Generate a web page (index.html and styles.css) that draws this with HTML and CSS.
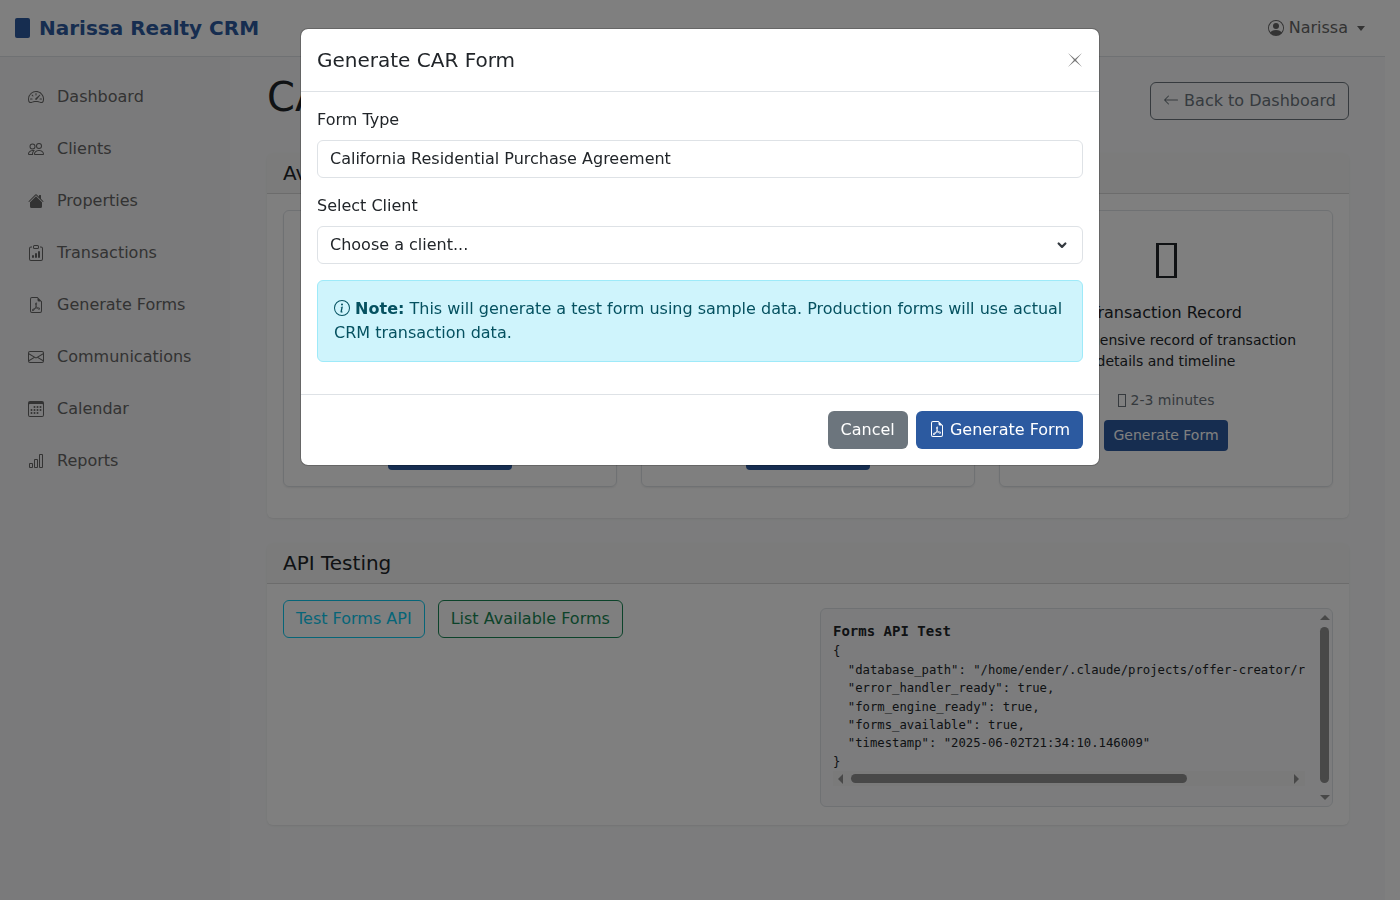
FILE: index.html
```html
<!doctype html>
<html>
  <head>
    <title>CAR Forms - Narissa Realty CRM</title>
    <meta name="viewport" content="width=device-width, initial-scale=1">
    <link rel="stylesheet" href="styles.css">
  </head>
  <body>
    <nav class="topbar">
      <a class="brand" href="#"><span class="brand-mark"></span>Narissa Realty CRM</a>
      <a class="user" href="#">
        <svg class="icon" viewBox="0 0 16 16"><path d="M11 6a3 3 0 1 1-6 0 3 3 0 0 1 6 0z"/><path fill-rule="evenodd" d="M0 8a8 8 0 1 1 16 0A8 8 0 0 1 0 8zm8-7a7 7 0 0 0-5.468 11.37C3.242 11.226 4.805 10 8 10s4.757 1.225 5.468 2.37A7 7 0 0 0 8 1z"/></svg>
        Narissa<span class="caret"></span>
      </a>
    </nav>

    <div class="layout">
      <aside class="sidebar">
        <a class="side-link" href="#">
          <svg class="icon" viewBox="0 0 16 16"><path d="M8 4a.5.5 0 0 1 .5.5V6a.5.5 0 0 1-1 0V4.5A.5.5 0 0 1 8 4zM3.732 5.732a.5.5 0 0 1 .707 0l.915.914a.5.5 0 1 1-.708.708l-.914-.915a.5.5 0 0 1 0-.707zM2 10a.5.5 0 0 1 .5-.5h1.586a.5.5 0 0 1 0 1H2.5A.5.5 0 0 1 2 10zm9.5 0a.5.5 0 0 1 .5-.5h1.5a.5.5 0 0 1 0 1H12a.5.5 0 0 1-.5-.5zm.754-4.246a.389.389 0 0 0-.527-.02L7.547 9.31a.91.91 0 1 0 1.302 1.258l3.434-4.297a.389.389 0 0 0-.029-.518z"/><path fill-rule="evenodd" d="M0 10a8 8 0 1 1 15.547 2.661c-.442 1.253-1.845 1.602-2.932 1.25C11.309 13.488 9.475 13 8 13c-1.474 0-3.31.488-4.615.911-1.087.352-2.49.003-2.932-1.25A7.988 7.988 0 0 1 0 10zm8-7a7 7 0 0 0-6.603 9.329c.203.575.923.876 1.68.63C4.397 12.533 6.358 12 8 12s3.604.532 4.923.96c.757.245 1.477-.056 1.68-.631A7 7 0 0 0 8 3z"/></svg>
          Dashboard
        </a>
        <a class="side-link" href="#">
          <svg class="icon" viewBox="0 0 16 16"><path d="M15 14s1 0 1-1-1-4-5-4-5 3-5 4 1 1 1 1h8Zm-7.978-1A.261.261 0 0 1 7 12.996c.001-.264.167-1.03.76-1.72C8.312 10.629 9.282 10 11 10c1.717 0 2.687.63 3.24 1.276.593.69.758 1.457.76 1.72l-.008.002a.274.274 0 0 1-.014.002H7.022ZM11 7a2 2 0 1 0 0-4 2 2 0 0 0 0 4Zm3-2a3 3 0 1 1-6 0 3 3 0 0 1 6 0ZM6.936 9.28a5.88 5.88 0 0 0-1.23-.247A7.35 7.35 0 0 0 5 9c-4 0-5 3-5 4 0 .667.333 1 1 1h4.216A2.238 2.238 0 0 1 5 13c0-1.01.377-2.042 1.09-2.904.243-.294.526-.569.846-.816ZM4.92 10A5.493 5.493 0 0 0 4 13H1c0-.26.164-1.03.76-1.724.545-.636 1.492-1.256 3.16-1.275ZM1.5 5.5a3 3 0 1 1 6 0 3 3 0 0 1-6 0Zm3-2a2 2 0 1 0 0 4 2 2 0 0 0 0-4Z"/></svg>
          Clients
        </a>
        <a class="side-link" href="#">
          <svg class="icon" viewBox="0 0 16 16"><path d="M8.707 1.5a1 1 0 0 0-1.414 0L.646 8.146a.5.5 0 0 0 .708.708L8 2.207l6.646 6.647a.5.5 0 0 0 .708-.708L13 5.793V2.5a.5.5 0 0 0-.5-.5h-1a.5.5 0 0 0-.5.5v1.293L8.707 1.5Z"/><path d="m8 3.293 6 6V13.5a1.5 1.5 0 0 1-1.5 1.5h-9A1.5 1.5 0 0 1 2 13.5V9.293l6-6Z"/></svg>
          Properties
        </a>
        <a class="side-link" href="#">
          <svg class="icon" viewBox="0 0 16 16"><path d="M4 11a1 1 0 1 1 2 0v1a1 1 0 1 1-2 0v-1zm6-4a1 1 0 1 1 2 0v5a1 1 0 1 1-2 0V7zM7 9a1 1 0 0 1 2 0v3a1 1 0 1 1-2 0V9z"/><path d="M4 1.5H3a2 2 0 0 0-2 2V14a2 2 0 0 0 2 2h10a2 2 0 0 0 2-2V3.5a2 2 0 0 0-2-2h-1v1h1a1 1 0 0 1 1 1V14a1 1 0 0 1-1 1H3a1 1 0 0 1-1-1V3.5a1 1 0 0 1 1-1h1v-1z"/><path d="M9.5 1a.5.5 0 0 1 .5.5v1a.5.5 0 0 1-.5.5h-3a.5.5 0 0 1-.5-.5v-1a.5.5 0 0 1 .5-.5h3zm-3-1A1.5 1.5 0 0 0 5 1.5v1A1.5 1.5 0 0 0 6.5 4h3A1.5 1.5 0 0 0 11 2.5v-1A1.5 1.5 0 0 0 9.5 0h-3z"/></svg>
          Transactions
        </a>
        <a class="side-link" href="#">
          <svg class="icon" viewBox="0 0 16 16"><path d="M14 14V4.5L9.5 0H4a2 2 0 0 0-2 2v12a2 2 0 0 0 2 2h8a2 2 0 0 0 2-2zM9.5 3A1.5 1.5 0 0 0 11 4.5h2V14a1 1 0 0 1-1 1H4a1 1 0 0 1-1-1V2a1 1 0 0 1 1-1h5.5v2z"/><path d="M4.603 14.087a.81.81 0 0 1-.438-.42c-.195-.388-.13-.776.08-1.102.198-.307.526-.568.897-.787a7.68 7.68 0 0 1 1.482-.645 19.697 19.697 0 0 0 1.062-2.227 7.269 7.269 0 0 1-.43-1.295c-.086-.4-.119-.796-.046-1.136.075-.354.274-.672.65-.823.192-.077.4-.12.602-.077a.7.7 0 0 1 .477.365c.088.164.12.356.127.538.007.188-.012.396-.047.614-.084.51-.27 1.134-.52 1.794a10.954 10.954 0 0 0 .98 1.686 5.753 5.753 0 0 1 1.334.05c.364.066.734.195.96.465.12.144.193.32.2.518.007.192-.047.382-.138.563a1.04 1.04 0 0 1-.354.416.856.856 0 0 1-.51.138c-.331-.014-.654-.196-.933-.417a5.712 5.712 0 0 1-.911-.95 11.651 11.651 0 0 0-1.997.406 11.307 11.307 0 0 1-1.02 1.51c-.292.35-.609.656-.927.787a.793.793 0 0 1-.58.029zm1.379-1.901c-.166.076-.32.156-.459.238-.328.194-.541.383-.647.547-.094.145-.096.25-.04.361.01.022.02.036.026.044a.266.266 0 0 0 .035-.012c.137-.056.355-.235.635-.572a8.18 8.18 0 0 0 .45-.606zm1.64-1.33a12.71 12.71 0 0 1 1.01-.193 11.744 11.744 0 0 1-.51-.858 20.801 20.801 0 0 1-.5 1.05zm2.446.45c.15.163.296.3.435.41.24.19.407.253.498.256a.107.107 0 0 0 .07-.015.307.307 0 0 0 .094-.125.436.436 0 0 0 .059-.2.095.095 0 0 0-.026-.063c-.052-.062-.2-.152-.518-.209a3.876 3.876 0 0 0-.612-.053zM8.078 7.8a6.7 6.7 0 0 0 .2-.828c.031-.188.043-.343.038-.465a.613.613 0 0 0-.032-.198.517.517 0 0 0-.145.04c-.087.035-.158.106-.196.283-.04.192-.03.469.046.822.024.111.054.227.09.346z"/></svg>
          Generate Forms
        </a>
        <a class="side-link" href="#">
          <svg class="icon" viewBox="0 0 16 16"><path d="M0 4a2 2 0 0 1 2-2h12a2 2 0 0 1 2 2v8a2 2 0 0 1-2 2H2a2 2 0 0 1-2-2V4Zm2-1a1 1 0 0 0-1 1v.217l7 4.2 7-4.2V4a1 1 0 0 0-1-1H2Zm13 2.383-4.708 2.825L15 11.105V5.383Zm-.034 6.876-5.64-3.471L8 9.583l-1.326-.795-5.64 3.47A1 1 0 0 0 2 13h12a1 1 0 0 0 .966-.741ZM1 11.105l4.708-2.897L1 5.383v5.722Z"/></svg>
          Communications
        </a>
        <a class="side-link" href="#">
          <svg class="icon" viewBox="0 0 16 16"><path d="M14 0H2a2 2 0 0 0-2 2v12a2 2 0 0 0 2 2h12a2 2 0 0 0 2-2V2a2 2 0 0 0-2-2zM1 3.857C1 3.384 1.448 3 2 3h12c.552 0 1 .384 1 .857v10.286c0 .473-.448.857-1 .857H2c-.552 0-1-.384-1-.857V3.857z"/><path d="M6.5 7a1 1 0 1 0 0-2 1 1 0 0 0 0 2zm3 0a1 1 0 1 0 0-2 1 1 0 0 0 0 2zm3 0a1 1 0 1 0 0-2 1 1 0 0 0 0 2zm-9 3a1 1 0 1 0 0-2 1 1 0 0 0 0 2zm3 0a1 1 0 1 0 0-2 1 1 0 0 0 0 2zm3 0a1 1 0 1 0 0-2 1 1 0 0 0 0 2zm3 0a1 1 0 1 0 0-2 1 1 0 0 0 0 2zm-9 3a1 1 0 1 0 0-2 1 1 0 0 0 0 2zm3 0a1 1 0 1 0 0-2 1 1 0 0 0 0 2zm3 0a1 1 0 1 0 0-2 1 1 0 0 0 0 2z"/></svg>
          Calendar
        </a>
        <a class="side-link" href="#">
          <svg class="icon" viewBox="0 0 16 16"><path d="M4 11H2v3h2v-3zm5-4H7v7h2V7zm5-5v12h-2V2h2zm-2-1a1 1 0 0 0-1 1v12a1 1 0 0 0 1 1h2a1 1 0 0 0 1-1V2a1 1 0 0 0-1-1h-2zM6 7a1 1 0 0 1 1-1h2a1 1 0 0 1 1 1v7a1 1 0 0 1-1 1H7a1 1 0 0 1-1-1V7zm-5 4a1 1 0 0 1 1-1h2a1 1 0 0 1 1 1v3a1 1 0 0 1-1 1H2a1 1 0 0 1-1-1v-3z"/></svg>
          Reports
        </a>
      </aside>

      <main class="content">
        <div class="page-head">
          <h1>CAR Forms</h1>
          <a class="btn btn-back" href="#">
            <svg class="icon" viewBox="0 0 16 16"><path fill-rule="evenodd" d="M15 8a.5.5 0 0 0-.5-.5H2.707l3.147-3.146a.5.5 0 1 0-.708-.708l-4 4a.5.5 0 0 0 0 .708l4 4a.5.5 0 0 0 .708-.708L2.707 8.5H14.5A.5.5 0 0 0 15 8z"/></svg>
            Back to Dashboard
          </a>
        </div>

        <section class="card card-forms">
          <h5 class="card-head">Available Forms</h5>
          <div class="form-grid">
            <div class="form-card">
              <div class="form-icon"><span class="tofu"></span></div>
              <h6>Purchase Agreement</h6>
              <p>California residential purchase agreement with all standard terms</p>
              <small><span class="tofu tofu-sm"></span>5-7 minutes</small>
              <a class="btn btn-sm" href="#">Generate Form</a>
            </div>
            <div class="form-card">
              <div class="form-icon"><span class="tofu"></span></div>
              <h6>Listing Agreement</h6>
              <p>Residential listing agreement for sellers and their agents</p>
              <small><span class="tofu tofu-sm"></span>4-5 minutes</small>
              <a class="btn btn-sm" href="#">Generate Form</a>
            </div>
            <div class="form-card">
              <div class="form-icon"><span class="tofu"></span></div>
              <h6>Transaction Record</h6>
              <p>Comprehensive record of transaction details and timeline</p>
              <small><span class="tofu tofu-sm"></span>2-3 minutes</small>
              <a class="btn btn-sm" href="#">Generate Form</a>
            </div>
          </div>
        </section>

        <section class="card card-api">
          <h5 class="card-head">API Testing</h5>
          <div class="api-grid">
            <div class="api-actions">
              <a class="btn btn-info" href="#">Test Forms API</a>
              <a class="btn btn-success" href="#">List Available Forms</a>
            </div>
            <div class="api-result">
              <div class="api-scroll">
                <strong>Forms API Test</strong>
<pre>{
  "database_path": "/home/ender/.claude/projects/offer-creator/real_estate_crm/crm.db",
  "error_handler_ready": true,
  "form_engine_ready": true,
  "forms_available": true,
  "timestamp": "2025-06-02T21:34:10.146009"
}</pre>
                <div class="hbar">
                  <span class="arrow arrow-left"></span>
                  <span class="hbar-thumb"></span>
                  <span class="arrow arrow-right"></span>
                </div>
              </div>
              <div class="vbar">
                <span class="arrow arrow-up"></span>
                <span class="vbar-thumb"></span>
                <span class="arrow arrow-down"></span>
              </div>
            </div>
          </div>
        </section>
      </main>
    </div>

    <div class="backdrop"></div>

    <div class="modal">
      <div class="modal-head">
        <h5>Generate CAR Form</h5>
        <button class="close" aria-label="Close">
          <svg viewBox="0 0 16 16"><path d="M1 1 8 7 15 1 9 8 15 15 8 9 1 15 7 8Z"/></svg>
        </button>
      </div>
      <div class="modal-body">
        <label class="field-label">Form Type</label>
        <input class="field field-text" type="text" value="California Residential Purchase Agreement" readonly>
        <label class="field-label">Select Client</label>
        <select class="field field-select">
          <option>Choose a client...</option>
        </select>
        <div class="alert">
          <svg class="icon" viewBox="0 0 16 16"><path d="M8 15A7 7 0 1 1 8 1a7 7 0 0 1 0 14zm0 1A8 8 0 1 0 8 0a8 8 0 0 0 0 16z"/><path d="m8.93 6.588-2.29.287-.082.38.45.083c.294.07.352.176.288.469l-.738 3.468c-.194.897.105 1.319.808 1.319.545 0 1.178-.252 1.465-.598l.088-.42c-.2.176-.492.246-.686.246-.275 0-.375-.193-.304-.533L8.93 6.588zM9 4.5a1 1 0 1 1-2 0 1 1 0 0 1 2 0z"/></svg>
          <strong>Note:</strong> This will generate a test form using sample data. Production forms will use actual CRM transaction data.
        </div>
      </div>
      <div class="modal-foot">
        <button class="btn btn-cancel">Cancel</button>
        <button class="btn btn-primary">
          <svg class="icon" viewBox="0 0 16 16"><path d="M14 14V4.5L9.5 0H4a2 2 0 0 0-2 2v12a2 2 0 0 0 2 2h8a2 2 0 0 0 2-2zM9.5 3A1.5 1.5 0 0 0 11 4.5h2V14a1 1 0 0 1-1 1H4a1 1 0 0 1-1-1V2a1 1 0 0 1 1-1h5.5v2z"/><path d="M4.603 14.087a.81.81 0 0 1-.438-.42c-.195-.388-.13-.776.08-1.102.198-.307.526-.568.897-.787a7.68 7.68 0 0 1 1.482-.645 19.697 19.697 0 0 0 1.062-2.227 7.269 7.269 0 0 1-.43-1.295c-.086-.4-.119-.796-.046-1.136.075-.354.274-.672.65-.823.192-.077.4-.12.602-.077a.7.7 0 0 1 .477.365c.088.164.12.356.127.538.007.188-.012.396-.047.614-.084.51-.27 1.134-.52 1.794a10.954 10.954 0 0 0 .98 1.686 5.753 5.753 0 0 1 1.334.05c.364.066.734.195.96.465.12.144.193.32.2.518.007.192-.047.382-.138.563a1.04 1.04 0 0 1-.354.416.856.856 0 0 1-.51.138c-.331-.014-.654-.196-.933-.417a5.712 5.712 0 0 1-.911-.95 11.651 11.651 0 0 0-1.997.406 11.307 11.307 0 0 1-1.02 1.51c-.292.35-.609.656-.927.787a.793.793 0 0 1-.58.029zm1.379-1.901c-.166.076-.32.156-.459.238-.328.194-.541.383-.647.547-.094.145-.096.25-.04.361.01.022.02.036.026.044a.266.266 0 0 0 .035-.012c.137-.056.355-.235.635-.572a8.18 8.18 0 0 0 .45-.606zm1.64-1.33a12.71 12.71 0 0 1 1.01-.193 11.744 11.744 0 0 1-.51-.858 20.801 20.801 0 0 1-.5 1.05zm2.446.45c.15.163.296.3.435.41.24.19.407.253.498.256a.107.107 0 0 0 .07-.015.307.307 0 0 0 .094-.125.436.436 0 0 0 .059-.2.095.095 0 0 0-.026-.063c-.052-.062-.2-.152-.518-.209a3.876 3.876 0 0 0-.612-.053zM8.078 7.8a6.7 6.7 0 0 0 .2-.828c.031-.188.043-.343.038-.465a.613.613 0 0 0-.032-.198.517.517 0 0 0-.145.04c-.087.035-.158.106-.196.283-.04.192-.03.469.046.822.024.111.054.227.09.346z"/></svg>
          Generate Form
        </button>
      </div>
    </div>
  </body>
</html>
```

FILE: styles.css
```css
* {
  box-sizing: border-box;
}

html, body {
  height: 100%;
  margin: 0;
  overflow: hidden;
}

body {
  padding-right: 15px;
  background: #fff;
  color: #212529;
  font: 16px/1.5 "DejaVu Sans", sans-serif;
}

a {
  text-decoration: none;
}

.icon {
  width: 16px;
  height: 16px;
  fill: currentColor;
  vertical-align: -2px;
  flex: none;
}

/* top bar */

.topbar {
  height: 57px;
  display: flex;
  align-items: center;
  justify-content: space-between;
  padding: 0 20px 0 15px;
  border-bottom: 1px solid #dee2e6;
  background: #fff;
}

.brand {
  display: flex;
  align-items: center;
  gap: 9px;
  color: #2c5aa0;
  font-size: 20px;
  font-weight: 700;
}

.brand-mark {
  width: 15px;
  height: 20px;
  border-radius: 2px;
  background: #2c5aa0;
}

.user {
  color: #666;
  display: flex;
  align-items: center;
  gap: 5px;
}

.caret {
  margin-left: 4px;
  border-top: 5px solid;
  border-left: 4px solid transparent;
  border-right: 4px solid transparent;
}

/* layout */

.layout {
  display: flex;
  height: calc(100% - 57px);
}

.sidebar {
  width: 230px;
  flex: none;
  padding-top: 14px;
  background: #f5f5f6;
}

.side-link {
  display: flex;
  align-items: center;
  gap: 13px;
  height: 52px;
  padding-left: 28px;
  color: #666;
}

.content {
  flex: 1;
  padding: 16px 36px 0 37px;
  background: #f8f9fa;
}

.page-head {
  display: flex;
  justify-content: space-between;
  align-items: center;
  margin-bottom: 24px;
}

h1 {
  margin: 0 0 8px;
  font-size: 40px;
  font-weight: 500;
  line-height: 48px;
}

/* buttons */

.btn {
  display: inline-block;
  padding: 6px 12px;
  border: 1px solid transparent;
  border-radius: 6px;
  background: none;
  font: inherit;
  white-space: nowrap;
}

.btn-sm {
  padding: 4px 8px;
  border-radius: 4px;
  background: #2c5aa0;
  color: #fff;
  font-size: 14px;
}

.btn-back {
  border-color: #6c757d;
  color: #6c757d;
}

.btn-info {
  border-color: #0dcaf0;
  color: #0dcaf0;
}

.btn-success {
  border-color: #198754;
  color: #198754;
}

.btn-cancel {
  background: #6c757d;
  color: #fff;
}

.btn-primary {
  background: #2c5aa0;
  color: #fff;
}

/* cards */

.card {
  background: #fff;
  border-radius: 6px;
  box-shadow: 0 1px 2px rgba(0, 0, 0, .075);
  overflow: hidden;
}

.card-forms {
  margin-bottom: 25px;
}

.card-head {
  margin: 0;
  padding: 8px 16px;
  border-bottom: 1px solid rgba(0, 0, 0, .125);
  background: rgba(0, 0, 0, .03);
  font-size: 20px;
  font-weight: 500;
  line-height: 24px;
}

.form-grid {
  display: grid;
  grid-template-columns: repeat(3, 1fr);
  gap: 24px;
  padding: 16px 16px 31px;
}

.form-card {
  display: flex;
  flex-direction: column;
  align-items: center;
  height: 277px;
  padding: 16px;
  border: 1px solid #dee2e6;
  border-radius: 6px;
  box-shadow: 0 1px 2px rgba(0, 0, 0, .075);
  text-align: center;
}

.form-icon {
  display: flex;
  align-items: center;
  height: 72px;
  padding-bottom: 6px;
}

/* the reference's emoji have no font, so they show as empty boxes */
.tofu {
  display: block;
  width: 21px;
  height: 35px;
  border: solid #212529;
  border-width: 2px 3px;
}

.tofu-sm {
  width: 8px;
  height: 13px;
  border: 1px solid #6c757d;
}

.form-card h6 {
  margin: 3px 0 6px;
  font-size: 16px;
  font-weight: 500;
  line-height: 22px;
}

.form-card p {
  margin: 0 0 18px;
  font-size: 14px;
  line-height: 21px;
}

/* the first two descriptions run longer, their buttons peek out under the modal */
.form-card:not(:last-child) p {
  min-height: 61px;
}

.form-card small {
  display: flex;
  align-items: center;
  gap: 5px;
  margin-bottom: 9px;
  color: #6c757d;
  font-size: 14px;
}

/* api testing */

.api-grid {
  display: grid;
  grid-template-columns: 1fr 1fr;
  gap: 24px;
  padding: 16px 16px 18px;
}

.api-actions {
  display: flex;
  gap: 13px;
  align-items: flex-start;
}

.api-result {
  display: flex;
  height: 199px;
  margin-top: 8px;
  overflow: hidden;
  border: 1px solid #dee2e6;
  border-radius: 6px;
  background: #f8f9fa;
  font: 14px/21px "DejaVu Sans Mono", monospace;
}

.api-scroll {
  flex: 1;
  min-width: 0;
  padding: 12px 12px 0;
}

.api-scroll strong {
  display: block;
  height: 21.4px;
}

.api-scroll pre {
  margin: 0;
  overflow: hidden;
  font: 12.25px/18.375px "DejaVu Sans Mono", monospace;
}

/* scrollbars are drawn by hand, the browser here hides its own */
.hbar {
  display: flex;
  align-items: center;
  height: 15px;
  padding: 0 6px 0 5px;
  background: #f4f4f5;
}

.hbar-thumb {
  width: 336px;
  height: 9px;
  margin: 0 auto 0 8px;
  border-radius: 5px;
  background: #909090;
}

.vbar {
  display: flex;
  flex-direction: column;
  align-items: center;
  width: 15px;
  flex: none;
  padding-top: 6px;
}

.vbar-thumb {
  width: 9px;
  height: 156px;
  margin: 7px 0 12px;
  border-radius: 5px;
  background: #909090;
}

.arrow {
  display: block;
  width: 0;
  height: 0;
  border: 0 solid transparent;
}

.arrow-up {
  border-width: 0 5px 5px;
  border-bottom-color: #909090;
}

.arrow-down {
  border-width: 5px 5px 0;
  border-top-color: #909090;
}

.arrow-left {
  border-width: 5px 5px 5px 0;
  border-right-color: #909090;
}

.arrow-right {
  border-width: 5px 0 5px 5px;
  border-left-color: #909090;
}

/* modal */

.backdrop {
  position: fixed;
  inset: 0;
  background: rgba(0, 0, 0, .5);
}

.modal {
  position: fixed;
  top: 28px;
  left: 300px;
  width: 800px;
  border: 1px solid rgba(0, 0, 0, .2);
  border-radius: 8px;
  background: #fff;
  background-clip: padding-box;
}

.modal-head {
  display: flex;
  align-items: center;
  justify-content: space-between;
  height: 63px;
  padding: 0 16px;
  border-bottom: 1px solid #dee2e6;
}

.modal-head h5 {
  margin: 0;
  font-size: 20px;
  font-weight: 500;
}

.close {
  width: 16px;
  height: 16px;
  padding: 0;
  border: 0;
  background: none;
}

.close svg {
  display: block;
  fill: #777;
}

.modal-body {
  padding: 16px;
}

.field-label {
  display: block;
  margin-bottom: 8px;
}

.field {
  display: block;
  width: 100%;
  height: 38px;
  margin-bottom: 16px;
  padding: 6px 12px;
  border: 1px solid #dee2e6;
  border-radius: 6px;
  background-color: #fff;
  color: #212529;
  font: inherit;
}

.field-text {
  padding: 5px 12px 7px;
}

.field-select {
  appearance: none;
  background-image: url("data:image/svg+xml,%3csvg xmlns='http://www.w3.org/2000/svg' viewBox='0 0 16 16'%3e%3cpath fill='none' stroke='%23343a40' stroke-linecap='round' stroke-linejoin='round' stroke-width='3' d='m3.5 6 4.5 4.5L12.5 6'/%3e%3c/svg%3e");
  background-repeat: no-repeat;
  background-position: right 12px center;
  background-size: 16px 12px;
}

.alert {
  margin-bottom: 16px;
  padding: 16px;
  border: 1px solid #9eeaf9;
  border-radius: 6px;
  background: #cff4fc;
  color: #055160;
}

.modal-foot {
  display: flex;
  justify-content: flex-end;
  gap: 8px;
  padding: 16px;
  border-top: 1px solid #dee2e6;
}
```
